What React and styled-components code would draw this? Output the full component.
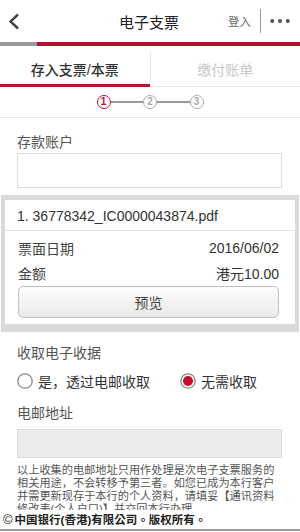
import styled, { createGlobalStyle } from 'styled-components'

const RED = '#b3132f'

const GlobalStyle = createGlobalStyle`
  html, body {
    margin: 0;
    padding: 0;
    background: #fff;
  }
  body {
    font-family: "Liberation Sans", "Noto Sans CJK SC", sans-serif;
    color: #333;
  }
  * {
    box-sizing: border-box;
  }
`

const Page = styled.div`
  width: 300px;
  height: 532px;
  display: flex;
  flex-direction: column;
  overflow: hidden;
  background: #fff;
`

const Header = styled.header`
  height: 42px;
  display: grid;
  grid-template-columns: 1fr auto 1fr;
  align-items: center;
  padding: 0 10px 0 8px;
`

const Title = styled.h1`
  margin: 0;
  font-size: 15px;
  font-weight: 400;
  color: #222;
`

const HeaderRight = styled.div`
  display: flex;
  align-items: center;
  justify-content: flex-end;
`

const Login = styled.span`
  font-size: 11.5px;
  color: #666;
`

const VDivider = styled.span`
  width: 1px;
  height: 24px;
  background: #999;
  margin: 0 9px 0 9px;
`

const Progress = styled.div`
  height: 4px;
  display: flex;
`

const ProgressPart = styled.div`
  width: ${(p) => (p.$grow ? 'auto' : `${p.$width}px`)};
  flex: ${(p) => (p.$grow ? 1 : 'none')};
  background: ${(p) => p.$color};
`

const TabBar = styled.nav`
  height: 41px;
  display: flex;
  box-shadow: inset 0 -1px 0 #e6e6e6;
`

const Tab = styled.div`
  flex: 1;
  display: flex;
  align-items: center;
  justify-content: center;
  padding-top: 7px;
  font-size: 14px;
  font-weight: ${(p) => (p.$active ? 500 : 400)};
  color: ${(p) => (p.$active ? '#333' : '#c8c8c8')};
  border-bottom: 3px solid ${(p) => (p.$active ? RED : 'transparent')};
`

const TabDivider = styled.span`
  width: 1px;
  height: 28px;
  margin-top: 6px;
  background: #e3e3e3;
`

const Steps = styled.div`
  height: 31px;
  display: flex;
  align-items: center;
  justify-content: center;
  border-bottom: 1px solid #e6e6e6;
`

const StepCircle = styled.span`
  width: 14px;
  height: 14px;
  border-radius: 50%;
  border: 1.7px solid ${(p) => (p.$active ? RED : '#aaa')};
  color: ${(p) => (p.$active ? RED : '#aaa')};
  font-size: 10px;
  font-weight: bold;
  display: flex;
  align-items: center;
  justify-content: center;
  line-height: 1;
`

const StepLine = styled.span`
  width: 32.5px;
  height: 1.5px;
  background: #9a9a9a;
`

const Content = styled.main`
  flex: 1;
  min-height: 0;
  overflow: hidden;
  padding: 0 18px 0 17px;
`

const Label = styled.div`
  font-size: 14px;
  line-height: 20px;
  color: #555;
  margin-top: ${(p) => p.$top}px;
`

const TextBox = styled.div`
  height: ${(p) => p.$height}px;
  margin-top: ${(p) => p.$top}px;
  border: 1px solid #dcdcdc;
  background: ${(p) => (p.$disabled ? '#ececec' : '#fff')};
`

const Card = styled.section`
  margin: 7px -17px 0 -16px;
  border-style: solid;
  border-color: #dadada;
  border-width: 5px 4px 8px 4px;
  background: #fff;
  padding-bottom: 6px;
`

const FileName = styled.div`
  height: 31px;
  display: flex;
  align-items: center;
  padding: 2px 12px 0;
  font-size: 14px;
  color: #333;
  border-bottom: 1px solid #e2e2e2;
`

const CardBody = styled.div`
  padding: 4px 16px 0 13px;
`

const InfoRow = styled.div`
  height: 25px;
  display: flex;
  align-items: center;
  justify-content: space-between;
  font-size: 14px;
  color: #444;
`

const Value = styled.span`
  color: #333;
`

const PreviewButton = styled.button`
  display: block;
  width: 100%;
  height: 32px;
  margin-top: 1px;
  border: 1px solid #bfbfbf;
  border-radius: 5px;
  background: linear-gradient(#fdfdfd, #e9e9e9);
  font-family: inherit;
  font-size: 14px;
  color: #444;
`

const RadioGroup = styled.div`
  height: 24px;
  margin-top: 6px;
  display: flex;
  align-items: center;
  gap: 30px;
`

const RadioOption = styled.label`
  display: flex;
  align-items: center;
  gap: 5px;
  font-size: 14px;
  color: #333;
`

const Notice = styled.p`
  margin: 6px 0 0;
  font-size: 11.2px;
  line-height: 13px;
  color: #555;
`

const Footer = styled.footer`
  height: 21px;
  padding: 1px 0 0 3px;
  border-bottom: 2px solid #9a9a9a;
  margin-bottom: 1px;
  font-family: "Liberation Sans", "Noto Sans CJK TC", sans-serif;
  font-size: 11.5px;
  font-weight: bold;
  line-height: 17px;
  color: #222;
  white-space: nowrap;
  background: #fff;
`

const Copy = styled.span`
  font-size: 13px;
  font-weight: normal;
  margin-right: 2px;
`

function BackIcon() {
  return (
    <svg width="12" height="17" viewBox="0 0 12 17">
      <polyline points="10,1.5 2.5,8.5 10,15.5" fill="none" stroke="#444" strokeWidth="2.4" />
    </svg>
  )
}

function MoreIcon() {
  return (
    <svg width="20" height="6" viewBox="0 0 20 6">
      <circle cx="2.2" cy="3" r="2" fill="#555" />
      <circle cx="10" cy="3" r="2" fill="#555" />
      <circle cx="17.8" cy="3" r="2" fill="#555" />
    </svg>
  )
}

function Radio({ checked }) {
  return (
    <svg width="16" height="16" viewBox="0 0 16 16">
      <circle cx="8" cy="8" r="7.2" fill="#fff" stroke="#8a8a8a" strokeWidth="1.3" />
      {checked && <circle cx="8" cy="8" r="5" fill="#c50f2c" />}
    </svg>
  )
}

export default function App() {
  return (
    <Page>
      <GlobalStyle />
      <Header>
        <BackIcon />
        <Title>电子支票</Title>
        <HeaderRight>
          <Login>登入</Login>
          <VDivider />
          <MoreIcon />
        </HeaderRight>
      </Header>
      <Progress>
        <ProgressPart $width={37} $color="#9a9a9a" />
        <ProgressPart $grow $color={RED} />
      </Progress>
      <TabBar>
        <Tab $active>存入支票/本票</Tab>
        <TabDivider />
        <Tab>缴付账单</Tab>
      </TabBar>
      <Steps>
        <StepCircle $active>1</StepCircle>
        <StepLine />
        <StepCircle>2</StepCircle>
        <StepLine />
        <StepCircle>3</StepCircle>
      </Steps>
      <Content>
        <Label $top={14}>存款账户</Label>
        <TextBox $height={35} $top={1} />
        <Card>
          <FileName>1. 36778342_IC0000043874.pdf</FileName>
          <CardBody>
            <InfoRow>
              <span>票面日期</span>
              <Value>2016/06/02</Value>
            </InfoRow>
            <InfoRow>
              <span>金额</span>
              <Value>港元10.00</Value>
            </InfoRow>
            <PreviewButton type="button">预览</PreviewButton>
          </CardBody>
        </Card>
        <Label $top={11}>收取电子收据</Label>
        <RadioGroup>
          <RadioOption>
            <Radio />
            是，透过电邮收取
          </RadioOption>
          <RadioOption>
            <Radio checked />
            无需收取
          </RadioOption>
        </RadioGroup>
        <Label $top={10}>电邮地址</Label>
        <TextBox $height={29} $top={6} $disabled />
        <Notice>
          以上收集的电邮地址只用作处理是次电子支票服务的相关用途，不会转移予第三者。如您已成为本行客户并需更新现存于本行的个人资料，请填妥【通讯资料修改表(个人户口)】并交回本行办理。
        </Notice>
      </Content>
      <Footer>
        <Copy>©</Copy>中国银行(香港)有限公司。版权所有。
      </Footer>
    </Page>
  )
}
